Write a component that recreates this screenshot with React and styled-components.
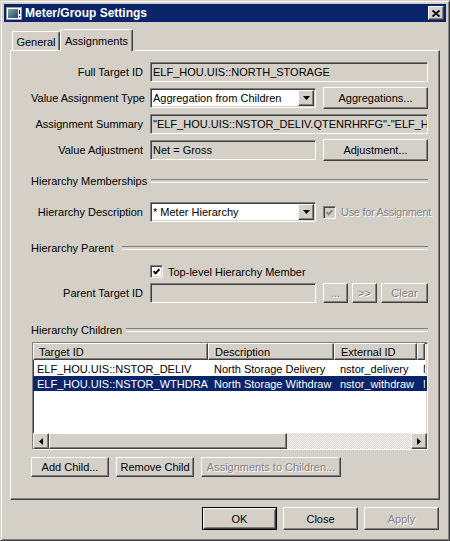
import React from 'react'
import styled, { createGlobalStyle, css } from 'styled-components'

const GlobalStyle = createGlobalStyle`
  html, body { margin: 0; padding: 0; background: #d4d0c8; }
  body {
    font-family: "Liberation Sans", Arial, sans-serif;
    font-size: 11px;
    color: #000;
  }
  * { box-sizing: border-box; }
`

const raised = css`
  border: 1px solid;
  border-color: #fff #404040 #404040 #fff;
  box-shadow: inset -1px -1px #808080, inset 1px 1px #d4d0c8;
`
const sunken = css`
  border: 1px solid;
  border-color: #808080 #fff #fff #808080;
  box-shadow: inset 1px 1px #404040, inset -1px -1px #d4d0c8;
`
const disabledText = css`
  color: #808080;
  text-shadow: 1px 1px #fff;
`

const Window = styled.div`
  width: 450px;
  height: 541px;
  display: flex;
  flex-direction: column;
  padding: 3px;
  background: #d4d0c8;
  border: 1px solid;
  border-color: #d4d0c8 #404040 #404040 #d4d0c8;
  box-shadow: inset 1px 1px #fff, inset -1px -1px #808080;
`
const TitleBar = styled.div`
  height: 18px;
  display: flex;
  align-items: center;
  padding: 0 2px;
  background: #0a246a;
`
const Title = styled.span`
  flex: 1;
  margin-left: 3px;
  color: #fff;
  font-weight: bold;
  font-size: 12px;
`
const CloseBox = styled.div`
  width: 16px;
  height: 14px;
  display: flex;
  align-items: center;
  justify-content: center;
  background: #d4d0c8;
  ${raised};
`
const Body = styled.div`
  flex: 1;
  display: flex;
  flex-direction: column;
  padding: 7px 6px 0;
`
const TabStrip = styled.div`
  height: 21px;
  display: flex;
  align-items: flex-end;
  padding-left: 2px;
`
const Tab = styled.div`
  position: relative;
  z-index: ${p => (p.$active ? 2 : 1)};
  width: ${p => (p.$active ? 73 : 48)}px;
  height: ${p => (p.$active ? 22 : 19)}px;
  margin-bottom: ${p => (p.$active ? -1 : 0)}px;
  padding-top: ${p => (p.$active ? 0 : 2)}px;
  display: flex;
  align-items: center;
  justify-content: center;
  background: #d4d0c8;
  border-top: 1px solid #fff;
  border-left: 1px solid #fff;
  border-right: 1px solid #404040;
  border-radius: 2px 2px 0 0;
  box-shadow: inset -1px 0 #808080;
`
const Panel = styled.div`
  flex: 1;
  display: flex;
  flex-direction: column;
  padding: 11px 11px 0 20px;
  border: 1px solid;
  border-color: #fff #404040 #404040 #fff;
  box-shadow: inset -1px -1px #808080;
`
const FormGrid = styled.div`
  display: grid;
  grid-template-columns: 112px 166px 105px;
  column-gap: 7px;
  row-gap: ${p => p.$gap ?? 6}px;
  align-items: center;
  margin-top: ${p => p.$mt || 0}px;
`
const Label = styled.span`
  text-align: right;
  white-space: nowrap;
`
const Field = styled.div`
  grid-column: ${p => (p.$wide ? '2 / 4' : 'auto')};
  height: 20px;
  display: flex;
  align-items: center;
  padding: 0 2px;
  overflow: hidden;
  white-space: nowrap;
  background: ${p => (p.$readOnly ? '#d4d0c8' : '#fff')};
  ${sunken};
`
const ComboText = styled.span`
  flex: 1;
  overflow: hidden;
`
const DropButton = styled.span`
  width: 16px;
  height: 16px;
  display: flex;
  align-items: center;
  justify-content: center;
  margin-right: -1px;
  background: #d4d0c8;
  ${raised};
`
const Button = styled.button`
  font: inherit;
  width: ${p => (p.$w ? `${p.$w}px` : '100%')};
  height: ${p => p.$h || 20}px;
  margin: ${p => p.$m || 0};
  padding: 0;
  background: #d4d0c8;
  color: #000;
  flex-shrink: 0;
  ${p => (p.$default ? css`
    border: 1px solid #000;
    box-shadow: inset 1px 1px #fff, inset -1px -1px #404040, inset 2px 2px #d4d0c8, inset -2px -2px #808080;
  ` : raised)};
  ${p => p.disabled && disabledText};
`
const ButtonGroup = styled.div`
  display: flex;
  gap: 4px;
`
const Section = styled.div`
  height: 14px;
  display: flex;
  align-items: center;
  margin-top: ${p => p.$mt}px;
  &::after {
    content: '';
    flex: 1;
    height: 2px;
    border-top: 1px solid #808080;
    border-bottom: 1px solid #fff;
  }
`
const SectionTitle = styled.span`
  min-width: 87px;
  margin-right: 4px;
  white-space: nowrap;
`
const CheckLabel = styled.label`
  grid-column: ${p => (p.$wide ? '2 / 4' : 'auto')};
  display: flex;
  align-items: center;
  gap: 5px;
  white-space: nowrap;
  ${p => p.$disabled && css`
    ${disabledText};
    letter-spacing: -0.3px;
  `};
`
const Box = styled.span`
  width: 13px;
  height: 13px;
  flex-shrink: 0;
  display: flex;
  align-items: center;
  justify-content: center;
  background: ${p => (p.$disabled ? '#d4d0c8' : '#fff')};
  ${sunken};
`
const List = styled.div`
  width: 396px;
  height: 108px;
  margin: 5px 0 0 1px;
  display: flex;
  flex-direction: column;
  overflow: hidden;
  background: #fff;
  ${sunken};
`
const Header = styled.div`
  height: 17px;
  display: flex;
  flex-shrink: 0;
`
const HeaderCell = styled.div`
  width: ${p => p.$w}px;
  flex-shrink: 0;
  display: flex;
  align-items: center;
  padding-left: ${p => p.$pad}px;
  overflow: hidden;
  white-space: nowrap;
  background: #d4d0c8;
  ${raised};
`
const Rows = styled.div`
  flex: 1;
  padding-top: 1px;
  overflow: hidden;
`
const Row = styled.div`
  height: 15px;
  display: flex;
  align-items: center;
  background: ${p => (p.$selected ? '#0a246a' : 'transparent')};
  color: ${p => (p.$selected ? '#fff' : '#000')};
`
const Cell = styled.div`
  width: ${p => p.$w}px;
  flex-shrink: 0;
  padding-left: ${p => p.$pad}px;
  overflow: hidden;
  white-space: nowrap;
`
const ScrollBar = styled.div`
  height: 16px;
  display: flex;
  flex-shrink: 0;
`
const ScrollArrow = styled.div`
  width: 16px;
  height: 16px;
  display: flex;
  align-items: center;
  justify-content: center;
  background: #d4d0c8;
  ${raised};
`
const Thumb = styled.div`
  width: ${p => p.$w}px;
  height: 16px;
  background: #d4d0c8;
  ${raised};
`
const Track = styled.div`
  flex: 1;
  background-image: repeating-conic-gradient(#d4d0c8 0 25%, #fff 0 50%);
  background-size: 2px 2px;
`
const ActionRow = styled.div`
  display: flex;
  gap: 7px;
  margin-top: 7px;
`
const Footer = styled.div`
  height: 37px;
  display: flex;
  justify-content: flex-end;
  align-items: flex-start;
  gap: 6px;
  padding: 7px 1px 0 0;
`

const AppIcon = () => (
  <svg width="16" height="13" viewBox="0 0 16 13">
    <defs>
      <linearGradient id="ico" x1="0" y1="0" x2="1" y2="1">
        <stop offset="0" stopColor="#7fb08a" />
        <stop offset="1" stopColor="#1c3f8c" />
      </linearGradient>
    </defs>
    <rect x="0.5" y="0.5" width="15" height="12" fill="#fff" stroke="#9c9c9c" />
    <rect x="2" y="2" width="10" height="9" fill="url(#ico)" />
    <rect x="13" y="3" width="1" height="4" fill="#000" />
    <rect x="13" y="9" width="1" height="1" fill="#000" />
  </svg>
)

const CloseGlyph = () => (
  <svg width="8" height="7" viewBox="0 0 8 7">
    <path d="M0.5 0.5 L7.5 6.5 M7.5 0.5 L0.5 6.5" stroke="#000" strokeWidth="1.8" />
  </svg>
)

const DownArrow = () => (
  <svg width="7" height="4" viewBox="0 0 7 4">
    <path d="M0 0h7l-3.5 4z" fill="#000" />
  </svg>
)

const SideArrow = ({ right }) => (
  <svg width="4" height="7" viewBox="0 0 4 7">
    <path d={right ? 'M0 0v7l4-3.5z' : 'M4 0v7l-4-3.5z'} fill="#000" />
  </svg>
)

const Check = ({ color }) => (
  <svg width="7" height="7" viewBox="0 0 7 7">
    <path d="M0.6 3.2 L2.6 5.3 L6.4 1.2" fill="none" stroke={color} strokeWidth="1.9" />
  </svg>
)

// last column is only partly visible in the list (8px of it)
const columns = [
  { title: 'Target ID', w: 175, hp: 5, rp: 4 },
  { title: 'Description', w: 126, hp: 6, rp: 6 },
  { title: 'External ID', w: 83, hp: 6, rp: 6 },
  { title: 'Adjustment', w: 8, hp: 6, rp: 6 },
]

const children = [
  ['ELF_HOU.UIS::NSTOR_DELIV', 'North Storage Delivery', 'nstor_delivery', 'Net = Gross'],
  ['ELF_HOU.UIS::NSTOR_WTHDRAW', 'North Storage Withdraw', 'nstor_withdraw', 'Net = Gross'],
]

const App = () => (
  <>
    <GlobalStyle />
    <Window>
      <TitleBar>
        <AppIcon />
        <Title>Meter/Group Settings</Title>
        <CloseBox><CloseGlyph /></CloseBox>
      </TitleBar>
      <Body>
        <TabStrip>
          <Tab>General</Tab>
          <Tab $active>Assignments</Tab>
        </TabStrip>
        <Panel>
          <FormGrid>
            <Label>Full Target ID</Label>
            <Field $wide $readOnly>ELF_HOU.UIS::NORTH_STORAGE</Field>

            <Label>Value Assignment Type</Label>
            <Field>
              <ComboText>Aggregation from Children</ComboText>
              <DropButton><DownArrow /></DropButton>
            </Field>
            <Button $h={22} $m="-1px 0">Aggregations...</Button>

            <Label>Assignment Summary</Label>
            <Field $wide $readOnly>"ELF_HOU.UIS::NSTOR_DELIV.QTENRHRFG"-"ELF_HOU.UIS::NSTOR_WTHDRAW.QTENRHRFG"</Field>

            <Label>Value Adjustment</Label>
            <Field $readOnly>Net = Gross</Field>
            <Button $h={22} $m="-1px 0">Adjustment...</Button>
          </FormGrid>

          <Section $mt={14}><SectionTitle>Hierarchy Memberships</SectionTitle></Section>

          <FormGrid $mt={14}>
            <Label>Hierarchy Description</Label>
            <Field>
              <ComboText>* Meter Hierarchy</ComboText>
              <DropButton><DownArrow /></DropButton>
            </Field>
            <CheckLabel $disabled>
              <Box $disabled><Check color="#808080" /></Box>
              Use for Assignment
            </CheckLabel>
          </FormGrid>

          <Section $mt={19}><SectionTitle>Hierarchy Parent</SectionTitle></Section>

          <FormGrid $mt={10} $gap={5}>
            <span />
            <CheckLabel $wide>
              <Box><Check color="#000" /></Box>
              Top-level Hierarchy Member
            </CheckLabel>

            <Label>Parent Target ID</Label>
            <Field $readOnly />
            <ButtonGroup>
              <Button $w={25} disabled>...</Button>
              <Button $w={25} disabled>&gt;&gt;</Button>
              <Button $w={47} disabled>Clear</Button>
            </ButtonGroup>
          </FormGrid>

          <Section $mt={20}><SectionTitle>Hierarchy Children</SectionTitle></Section>

          <List>
            <Header>
              {columns.map(c => (
                <HeaderCell key={c.title} $w={c.w} $pad={c.hp}>{c.title}</HeaderCell>
              ))}
            </Header>
            <Rows>
              {children.map((r, i) => (
                <Row key={r[0]} $selected={i === 1}>
                  {r.map((v, j) => (
                    <Cell key={j} $w={columns[j].w} $pad={columns[j].rp}>{v}</Cell>
                  ))}
                </Row>
              ))}
            </Rows>
            <ScrollBar>
              <ScrollArrow><SideArrow /></ScrollArrow>
              <Thumb $w={238} />
              <Track />
              <ScrollArrow><SideArrow right /></ScrollArrow>
            </ScrollBar>
          </List>

          <ActionRow>
            <Button $w={78}>Add Child...</Button>
            <Button $w={78}>Remove Child</Button>
            <Button $w={140} disabled>Assignments to Children...</Button>
          </ActionRow>
        </Panel>
        <Footer>
          <Button $w={75} $h={23} $default>OK</Button>
          <Button $w={75} $h={23}>Close</Button>
          <Button $w={75} $h={23} disabled>Apply</Button>
        </Footer>
      </Body>
    </Window>
  </>
)

export default App
